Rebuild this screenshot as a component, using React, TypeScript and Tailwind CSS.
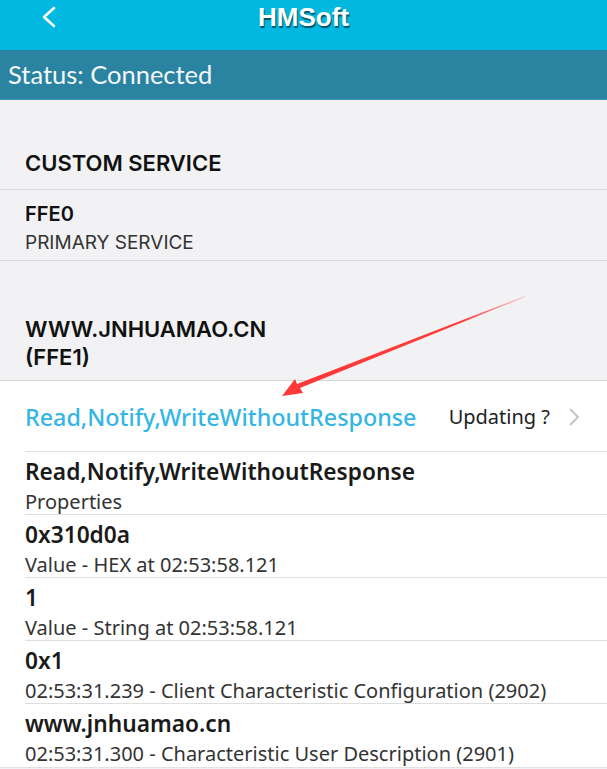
import React from "react";

const sf = { fontFamily: "Inter, 'Liberation Sans', sans-serif" };
const ns = { fontFamily: "'Noto Sans', 'Open Sans', sans-serif" };
const lt = { fontFamily: "Lato, 'Noto Sans', sans-serif" };

function Row({ title, sub, last }: { title: string; sub: string; last?: boolean }) {
  return (
    <div className="pl-[25px]">
      <div className={`h-[63px] flex flex-col ${last ? "" : "border-b border-[#dedede]"}`} style={ns}>
        <div className="text-[22.7px] font-semibold text-[#1a1a1a] leading-[24px] mt-[8px]">{title}</div>
        <div className="text-[20px] text-[#333] leading-[22px] mt-[6.5px]">{sub}</div>
      </div>
    </div>
  );
}

export default function App() {
  return (
    <div className="w-[607px] h-[769px] overflow-hidden relative bg-[#f2f2f4]">
      <div className="h-[50px] bg-[#00b8e0] flex items-center justify-center relative">
        <svg className="absolute left-[38px] top-[5px]" width="22" height="24" viewBox="0 0 22 24">
          <path d="M16 3 L6 12 L16 21" stroke="white" strokeWidth="2.6" fill="none" strokeLinecap="round" strokeLinejoin="round" />
        </svg>
        <div
          className="text-white text-[26px] font-bold -mt-[16px]"
          style={{ fontFamily: "'Liberation Sans', Arial, sans-serif", textShadow: "1px 2px 1px rgba(0,0,0,0.55)" }}
        >
          HMSoft
        </div>
      </div>
      <div className="h-[50px] bg-[#2a83a1] flex items-center pl-[8px] border-b border-[#3c93b0]">
        <div className="text-[#f3f7f8] text-[25.5px] leading-none" style={lt}>Status: Connected</div>
      </div>
      <div className="bg-[#f2f2f4]" style={sf}>
        <div className="h-[90px] flex items-end pl-[25px] pb-[13px] border-b border-[#dcdcdc]">
          <div className="text-[22px] font-semibold text-[#111] leading-[26px]">CUSTOM SERVICE</div>
        </div>
        <div className="h-[71px] pl-[25px] border-b border-[#dcdcdc] flex flex-col">
          <div className="text-[20px] font-semibold text-[#111] leading-[22px] mt-[13px]">FFE0</div>
          <div className="text-[19px] text-[#333] leading-[22px] mt-[7px]">PRIMARY SERVICE</div>
        </div>
        <div className="h-[120px] pl-[25px] border-b border-[#d6d6d6] flex flex-col justify-end pb-[9px]">
          <div className="text-[22px] font-semibold text-[#111] leading-[28px]">WWW.JNHUAMAO.CN</div>
          <div className="text-[22px] font-semibold text-[#111] leading-[28px]">(FFE1)</div>
        </div>
      </div>
      <div className="bg-white border-b border-[#e2e2e2]">
        <div className="pl-[25px]">
          <div className="h-[71px] flex items-center border-b border-[#dedede] pr-[27px] pt-[2px]" style={ns}>
            <div className="text-[23.3px] text-[#33b6e6] font-medium">Read,Notify,WriteWithoutResponse</div>
            <div className="flex-1" />
            <div className="text-[20px] text-[#222] mr-[18px]">Updating ?</div>
            <svg width="12" height="20" viewBox="0 0 12 20">
              <path d="M2 2 L10 10 L2 18" stroke="#c4c4c4" strokeWidth="2" fill="none" />
            </svg>
          </div>
        </div>
        <Row title="Read,Notify,WriteWithoutResponse" sub="Properties" />
        <Row title="0x310d0a" sub="Value - HEX at 02:53:58.121" />
        <Row title="1" sub="Value - String at 02:53:58.121" />
        <Row title="0x1" sub="02:53:31.239 - Client Characteristic Configuration (2902)" />
        <Row title="www.jnhuamao.cn" sub="02:53:31.300 - Characteristic User Description (2901)" last />
      </div>
      <svg className="absolute left-0 top-0 pointer-events-none" width="607" height="769" viewBox="0 0 607 769">
        <defs>
          <linearGradient id="ag" x1="525" y1="296" x2="282" y2="396" gradientUnits="userSpaceOnUse">
            <stop offset="0" stopColor="#ff3b3b" stopOpacity="0.2" />
            <stop offset="0.25" stopColor="#ff3b3b" stopOpacity="1" />
            <stop offset="1" stopColor="#ff3838" />
          </linearGradient>
        </defs>
        <polygon points="525,296 297,384 295,379 282,396 303,393 300,388 525,297" fill="url(#ag)" />
      </svg>
    </div>
  );
}
